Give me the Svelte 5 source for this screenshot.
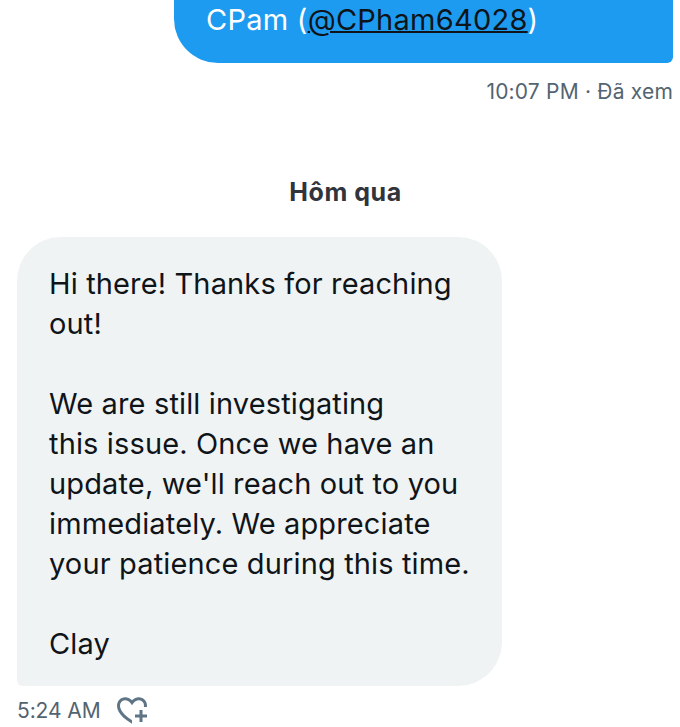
<script lang="ts">
    const paragraphs = [
        ['Hi there! Thanks for reaching', 'out!'],
        ['We are still investigating', 'this issue. Once we have an', "update, we'll reach out to you", 'immediately. We appreciate', 'your patience during this time.'],
        ['Clay']
    ];
</script>

<div class="chat">
    <div class="sent-row">
        <div class="sent">CPam (<span class="handle">@CPham64028</span>)</div>
    </div>
    <div class="sent-meta">10:07 PM · Đã xem</div>

    <div class="day">Hôm qua</div>

    <div class="received">
        {#each paragraphs as lines}
            <p>
                {#each lines as line}
                    <span>{line}</span>
                {/each}
            </p>
        {/each}
    </div>
    <div class="recv-meta">
        <span>5:24 AM</span>
        <svg class="react" viewBox="0 0 24 24" width="36" height="36" fill="#5f7485">
            <path d="M17 12v3h-2.998v2h3v3h2v-3h3v-2h-3.001v-3H17zm-5 6.839c-3.871-2.34-6.053-4.639-7.127-6.609-1.112-2.04-1.031-3.7-.479-4.82.561-1.13 1.667-1.84 2.91-1.91 1.222-.06 2.68.51 3.892 2.16l.806 1.09.805-1.09c1.211-1.65 2.668-2.22 3.89-2.16 1.242.07 2.347.78 2.908 1.91.334.677.49 1.554.321 2.59h2.011c.153-1.283-.039-2.469-.539-3.48-.887-1.79-2.647-2.91-4.601-3.01-1.65-.09-3.367.56-4.796 2-1.43-1.44-3.147-2.09-4.798-2-1.954.1-3.714 1.22-4.601 3.01-.896 1.81-.846 4.17.514 6.67 1.353 2.48 4.003 5.12 8.382 7.67L12 21.16v-2.32z"/>
        </svg>
    </div>
</div>

<style>
    :global(body) {
        background: #fff;
    }
    .chat {
        height: 727px;
        width: 680px;
        overflow: hidden;
        font-family: Inter, sans-serif;
        color: #0f1419;
    }
    .sent-row {
        display: flex;
        justify-content: flex-end;
        padding-right: 7px;
    }
    .sent {
        width: 499px;
        height: 63px;
        box-sizing: border-box;
        background: #1d9bf0;
        color: #fff;
        border-radius: 0 0 6px 44px;
        font-size: 29px;
        letter-spacing: 0.25px;
        line-height: 40px;
        padding-left: 32px;
    }
    .handle {
        text-decoration: underline;
        text-decoration-thickness: 2px;
        color: #0f1419;
    }
    .sent-meta {
        text-align: right;
        padding: 15px 7px 0 0;
        font-size: 21px;
        letter-spacing: 0.2px;
        line-height: 28px;
        color: #536471;
    }
    .day {
        margin-top: 72px;
        padding-left: 11px;
        text-align: center;
        font-size: 25px;
        font-weight: 700;
        letter-spacing: 0.55px;
        line-height: 28px;
        color: #31343b;
    }
    .received {
        margin: 31px 0 0 17px;
        width: 485px;
        height: 449px;
        box-sizing: border-box;
        background: #eff3f4;
        border-radius: 44px 44px 44px 6px;
        padding: 27px 32px 0;
        font-size: 29px;
        letter-spacing: 0.14px;
        line-height: 40px;
    }
    p {
        margin: 0 0 40px;
    }
    p span {
        display: block;
        white-space: nowrap;
    }
    .recv-meta {
        margin: 6px 0 0 17px;
        display: flex;
        align-items: center;
        gap: 13px;
        font-size: 21px;
        letter-spacing: -0.1px;
        color: #536471;
    }
</style>
